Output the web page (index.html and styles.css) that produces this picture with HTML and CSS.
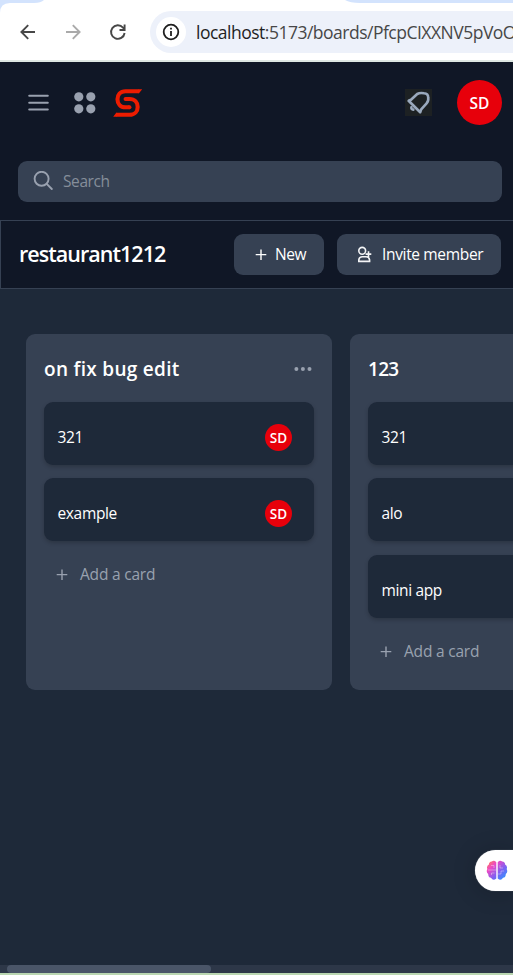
FILE: index.html
```html
<!DOCTYPE html>
<html lang="en">
<head>
<meta charset="utf-8">
<title>restaurant1212</title>
<link rel="stylesheet" href="styles.css">
</head>
<body>
<div class="browser">
  <svg class="tabs" width="513" height="14" viewBox="0 0 513 14"><path d="M0 0H44Q41 3 34 3H10Q0 3 0 13ZM345 0H513V3H360Q350 3 345 0Z" fill="#d3e3fd"/></svg>
  <svg class="nav-icon" width="18" height="18" viewBox="0 0 18 18" fill="none" stroke="#474747" stroke-width="1.9"><path d="M16 9H3M9.2 2.2L2.4 9L9.2 15.8"/></svg>
  <svg class="nav-icon" width="18" height="18" viewBox="0 0 18 18" fill="none" stroke="#aaa" stroke-width="1.9"><path d="M2 9H15M8.8 2.2L15.6 9L8.8 15.8"/></svg>
  <svg class="nav-icon" width="18" height="18" viewBox="0 0 18 18" fill="none" stroke="#474747" stroke-width="1.9"><path d="M15.6 10A6.8 6.8 0 1 1 14 4.6L15.3 6M10.5 7H15.6V1.6"/></svg>
  <div class="address">
    <span class="info"><svg width="18" height="18" viewBox="0 0 18 18" fill="none" stroke="#1f1f1f" stroke-width="1.8"><circle cx="9" cy="9" r="7.3"/><path d="M9 8V13M9 4.8V6.6"/></svg></span>
    <span class="url"><b>localhost</b>:5173/boards/PfcpCIXXNV5pVoO</span>
  </div>
</div>
<header class="header">
  <div class="topbar">
    <svg class="menu" width="21" height="18" viewBox="0 0 21 18" stroke="#99a1af" stroke-width="2" stroke-linecap="round"><path d="M1.2 1.7H19.8M1.2 8.7H19.8M1.2 15.5H19.8"/></svg>
    <svg class="apps" width="22" height="22" viewBox="0 0 22 22" fill="#99a1af"><circle cx="4.8" cy="4.8" r="4.6"/><circle cx="16.8" cy="4.8" r="4.6"/><circle cx="4.8" cy="16.8" r="4.6"/><circle cx="16.8" cy="16.8" r="4.6"/></svg>
    <svg class="logo" width="30" height="30" viewBox="0 0 30 30" fill="none" stroke="#ed1c00" stroke-width="4.1"><path d="M26 3.2H12.5C1.8 3.2 1.8 19.3 12.5 19.3H16.5"/><path d="M3 26.8H16.5C27.4 26.8 27.4 11 16.5 11H12.5"/><g fill="#ed1c00" stroke="none"><circle cx="16.4" cy="19.3" r="2.05"/><circle cx="12.6" cy="11" r="2.05"/><path d="M25.5 1.15H29.2L26 5.25H25.5ZM3.5 28.85H.2L3.2 24.75H3.5Z"/></g></svg>
    <svg class="bell" width="27" height="27" viewBox="0 0 27 27"><path d="M0 0H27V27H0Z" fill="#1d2123"/><g fill="none" stroke="#9aa9bd" stroke-width="2.6" stroke-linejoin="round" stroke-linecap="round"><path d="M3.6 11.8L6 10.7L12.2 5Q15 3.5 19 4.3Q23.2 4.5 23.2 8.5Q23.8 12 21.6 14.4L16.2 20.4L15.2 23.2Z"/><path d="M6.4 18.3Q6 20.5 8.3 20.6"/></g></svg>
    <span class="avatar">SD</span>
  </div>
  <div class="search">
    <svg width="20" height="20" viewBox="0 0 20 20" fill="none" stroke="#99a1af" stroke-width="1.9" stroke-linecap="round"><circle cx="8.6" cy="7.8" r="7"/><path d="M13.7 12.9L18.8 18"/></svg>
    <span>Search</span>
  </div>
</header>
<div class="boardbar">
  <h1>restaurant1212</h1>
  <button class="btn new"><svg width="12" height="12" viewBox="0 0 12 12" stroke="#fff" stroke-width="1.4"><path d="M6 .5V11M.7 5.6H11.3"/></svg><span>New</span></button>
  <button class="btn invite"><svg width="16" height="18" viewBox="0 0 16 18" fill="none" stroke="#f3f4f6" stroke-width="1.6"><circle cx="5.2" cy="4.8" r="3.4"/><path d="M1.8 15.4V13.8Q2.3 10.8 5.3 10.8H9.1Q12 10.8 12.6 13.8V15.4ZM8.6 8.1H14.3M11.5 5.3V10.9"/></svg><span>Invite member</span></button>
</div>
<main class="board">
  <section class="column">
    <div class="column-head"><h2>on fix bug edit</h2><svg width="20" height="5" viewBox="0 0 20 5" fill="#99a1af"><circle cx="2.4" cy="2" r="2"/><circle cx="8.9" cy="2" r="2"/><circle cx="15.5" cy="2" r="2"/></svg></div>
    <div class="card"><span>321</span><i>SD</i></div>
    <div class="card"><span>example</span><i>SD</i></div>
    <div class="add"><svg width="12" height="12" viewBox="0 0 12 12" stroke="#99a1af" stroke-width="1.4"><path d="M6 .5V11M.7 5.6H11.3"/></svg><span>Add a card</span></div>
  </section>
  <section class="column">
    <div class="column-head"><h2 class="digits">123</h2></div>
    <div class="card"><span>321</span></div>
    <div class="card"><span>alo</span></div>
    <div class="card"><span>mini app</span></div>
    <div class="add"><svg width="12" height="12" viewBox="0 0 12 12" stroke="#99a1af" stroke-width="1.4"><path d="M6 .5V11M.7 5.6H11.3"/></svg><span>Add a card</span></div>
  </section>
</main>
<div class="scrollbar"><div class="thumb"></div></div>
<div class="assistant"><svg width="22" height="21" viewBox="0 0 22 21"><defs><linearGradient id="g" x1="0" y1="0" x2="1" y2="1"><stop offset="0" stop-color="#ff8a45"/><stop offset=".28" stop-color="#ef48c3"/><stop offset=".62" stop-color="#7a62f4"/><stop offset="1" stop-color="#1ba5ff"/></linearGradient></defs><path fill="url(#g)" d="M10.3 2.2Q8-.2 5.8 1.5Q2.8 1.8 2.9 4.6Q.2 6.3 1.3 9Q-.2 12.1 2.2 14Q2.1 17.2 5 17.8Q7 21.5 10.3 18.6ZM11.7 2.2Q14-.2 16.2 1.5Q19.2 1.8 19.1 4.6Q21.8 6.3 20.7 9Q22.2 12.1 19.8 14Q19.9 17.2 17 17.8Q15 21.5 11.7 18.6Z"/><g fill="none" stroke="#fff" stroke-opacity=".4" stroke-width=".9"><path d="M5 5.5H8V8M2 10H10M5.5 15V13H8.5M14 5V8H17M12 14H15V11H18"/></g></svg></div>
</body>
</html>
```
FILE: styles.css
```css
* { box-sizing: border-box; }
body { margin: 0; width: 513px; height: 975px; overflow: hidden; display: flex; flex-direction: column; background: #1e2939; color: #fff; font: 15.5px/24px "Open Sans", "Noto Sans", sans-serif; }
svg { display: block; flex: none; }
h1, h2 { margin: 0; font-weight: 600; white-space: nowrap; }

.browser { position: relative; flex: none; height: 62px; background: #fff; border-bottom: 2px solid #dfe8e3; display: flex; align-items: center; padding: 3px 0 0 19px; gap: 27px; overflow: hidden; }
.tabs { position: absolute; left: 0; top: 0; }
.nav-icon { flex: none; }
.address { flex: 1; min-width: 0; height: 42px; margin-left: -4px; border-radius: 21px 0 0 21px; background: #edf1fa; display: flex; align-items: center; padding-left: 6px; overflow: hidden; }
.info { flex: none; width: 30px; height: 30px; border-radius: 50%; background: #fff; display: grid; place-items: center; }
.url { margin-left: 10px; font-size: 17.5px; color: #474747; white-space: nowrap; letter-spacing: -.5px; }
.url b { font-weight: 400; color: #1f1f1f; }

.header { flex: none; height: 158px; padding: 18px 11px 18px 18px; background: #101726; }
.topbar { height: 45px; display: flex; align-items: center; }
.menu { margin-left: 10px; }
.apps { margin-left: 25px; }
.logo { margin-left: 17px; }
.bell { margin-left: auto; }
.avatar { width: 45px; height: 45px; margin-left: 25px; border-radius: 50%; background: #e7000b; display: grid; place-items: center; font-size: 15.5px; font-weight: 600; }
.search { height: 41px; margin-top: 36px; border-radius: 9px; background: #364153; display: flex; align-items: center; gap: 10px; padding: 0 0 1px 15px; color: #858e9a; letter-spacing: -.4px; }

.boardbar { flex: none; height: 69px; border: 1px solid #364153; border-right: 0; background: #101726; display: flex; align-items: center; padding: 0 12px 0 18px; }
h1 { font-size: 21.5px; letter-spacing: -.97px; padding-bottom: 2px; }
.btn { height: 41px; border: 0; border-radius: 9px; background: #364153; color: #fff; display: flex; align-items: center; font: inherit; white-space: nowrap; padding: 0; }
.btn span, .add span { padding-bottom: 2px; }
.new { width: 90px; margin-left: auto; padding-left: 21px; gap: 8px; letter-spacing: -.4px; }
.invite { width: 164px; margin-left: 13px; padding-left: 20px; gap: 9px; letter-spacing: -.34px; }

.board { flex: 1; display: flex; align-items: flex-start; gap: 18px; padding: 45px 0 0 26px; overflow: hidden; }
.column { flex: none; width: 306px; height: 356px; border-radius: 9px; background: #364153; padding: 18px; }
.column-head { height: 34px; margin-bottom: 16px; display: flex; align-items: center; justify-content: space-between; }
h2 { font-size: 19px; letter-spacing: .3px; }
.digits { letter-spacing: -.7px; }
.card { height: 63px; margin-bottom: 13.4px; border-radius: 9px; background: #1e2939; box-shadow: 0 2px 4px #0003; display: flex; align-items: center; justify-content: space-between; padding: 8px 22px 0 13.5px; letter-spacing: -.35px; }
.card span { padding-bottom: 1px; }
.card i { width: 27px; height: 27px; border-radius: 50%; background: #e7000b; display: grid; place-items: center; font-style: normal; font-size: 13.5px; font-weight: 600; letter-spacing: 0; }
.add { height: 41px; display: flex; align-items: center; gap: 12px; padding-left: 12px; color: #99a1af; letter-spacing: -.2px; }

.scrollbar { flex: none; height: 10px; padding-left: 7px; background: #2d3748; border-bottom: 2px solid #bad7b1; }
.thumb { width: 204px; height: 8px; border-radius: 4px; background: #4a5568; }
.assistant { position: absolute; left: 475px; top: 850px; width: 38px; height: 41px; border-radius: 21px 0 0 21px; background: #fff; box-shadow: 0 0 1px #fff8, 0 2px 24px #0003; padding: 10px 0 0 11px; overflow: hidden; }
```
